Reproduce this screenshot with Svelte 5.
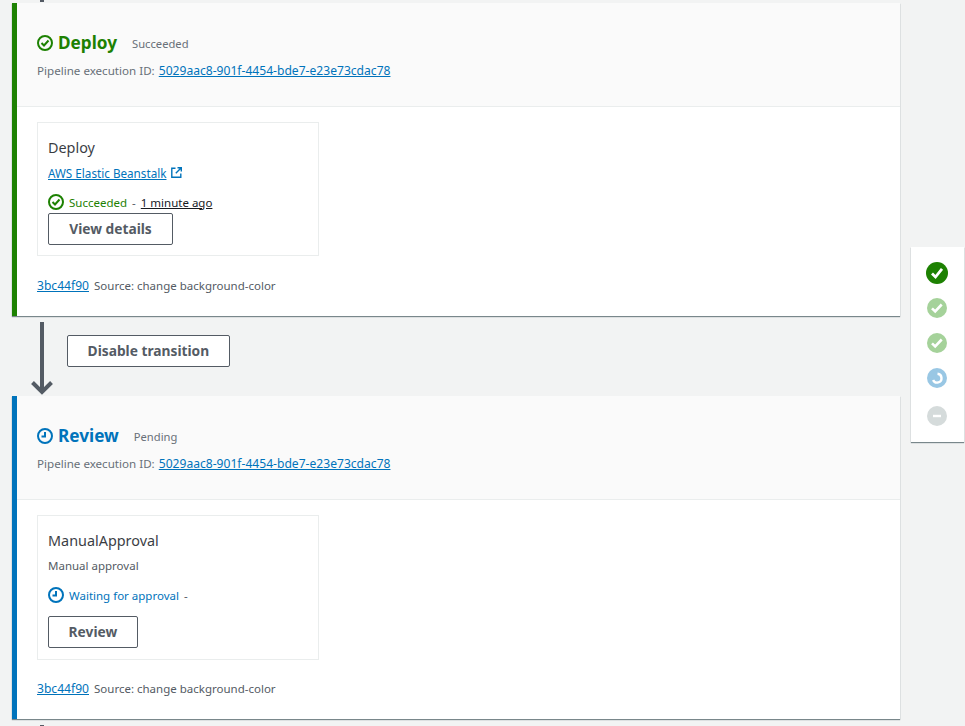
<script>
  const stages = [
    {
      name: "Deploy",
      status: "Succeeded",
      kind: "ok",
      action: "Deploy",
      provider: "AWS Elastic Beanstalk",
      link: true,
      state: "Succeeded",
      when: "1 minute ago",
      button: "View details"
    },
    {
      name: "Review",
      status: "Pending",
      kind: "wait",
      action: "ManualApproval",
      provider: "Manual approval",
      link: false,
      state: "Waiting for approval",
      when: "",
      button: "Review"
    }
  ];
</script>

{#snippet statusIcon(kind, size)}
  <svg class="ic" width={size} height={size} viewBox="0 0 16 16" fill="none" stroke="currentColor" stroke-width="2">
    <circle cx="8" cy="8" r="7" />
    {#if kind === "ok"}
      <path d="M4.5 8l2.5 2.5 4.5-5" />
    {:else}
      <path d="M8 4v4.5H4.5" />
    {/if}
  </svg>
{/snippet}

{#snippet stage(s)}
  <section class="stage {s.kind}">
    <header>
      <div class="title">
        {@render statusIcon(s.kind, 16)}
        <h2>{s.name}</h2>
        <span class="status">{s.status}</span>
      </div>
      <div class="exec">
        Pipeline execution ID: <a href="#top">5029aac8-901f-4454-bde7-e23e73cdac78</a>
      </div>
    </header>
    <div class="body">
      <div class="action">
        <div class="action-name">{s.action}</div>
        {#if s.link}
          <div class="provider">
            <a href="#top">{s.provider}</a>
            <svg class="ext" width="11" height="11" viewBox="0 0 11 11" fill="none" stroke="#0073bb" stroke-width="1.4">
              <path d="M4.5 1.200H.8v9h9V6.500" />
              <path d="M6.500.7h3.800v3.800M10 1L4.800 6.200" />
            </svg>
          </div>
        {:else}
          <div class="provider plain">{s.provider}</div>
        {/if}
        <div class="state">
          {@render statusIcon(s.kind, 16)}
          <span class="state-text">{s.state}</span>
          <span class="dash">-</span>
          {#if s.when}<span class="when">{s.when}</span>{/if}
        </div>
        <button>{s.button}</button>
      </div>
      <div class="commit">
        <a href="#top">3bc44f90</a> <span>Source: change background-color</span>
      </div>
    </div>
  </section>
{/snippet}

<div class="page" id="top">
  <div class="stub top"></div>
  {@render stage(stages[0])}
  <div class="transition">
    <svg class="arrow" width="22" height="74" viewBox="0 0 22 74" fill="none" stroke="#545b64" stroke-width="4">
      <path d="M11 0v69" />
      <path d="M1.500 60.500L11 70l9.500-9.500" />
    </svg>
    <button>Disable transition</button>
  </div>
  {@render stage(stages[1])}
  <div class="stub bottom"></div>

  <aside class="rail">
    <span class="dot done">
      <svg width="22" height="22" viewBox="0 0 22 22" fill="none" stroke="#fff" stroke-width="2.800"><path d="M6 11.500l3.500 3.500L16 6.800" /></svg>
    </span>
    <span class="dot done faded">
      <svg width="20" height="20" viewBox="0 0 20 20" fill="none" stroke="#fff" stroke-width="2.600"><path d="M5 10.300l3.200 3.200 6.500-7" /></svg>
    </span>
    <span class="dot done faded">
      <svg width="20" height="20" viewBox="0 0 20 20" fill="none" stroke="#fff" stroke-width="2.600"><path d="M5 10.300l3.200 3.200 6.500-7" /></svg>
    </span>
    <span class="dot pending">
      <svg width="20" height="20" viewBox="0 0 20 20" fill="none" stroke="#fff" stroke-width="2.400"><path d="M10.500 5.800a4.400 4.400 0 1 1-4.400 6.200" /></svg>
    </span>
    <span class="dot off">
      <svg width="20" height="20" viewBox="0 0 20 20" fill="none" stroke="#fff" stroke-width="2.400"><path d="M6 10h8" /></svg>
    </span>
  </aside>
</div>

<style>
  :global(body) {
    margin: 0;
    background: #f2f3f3;
    font-family: "Noto Sans", "Open Sans", sans-serif;
    color: #16191f;
  }

  .page {
    position: relative;
    width: 965px;
    height: 726px;
    overflow: hidden;
    padding: 3px 65px 0 12px;
    box-sizing: border-box;
  }

  a {
    color: #0073bb;
  }

  .stage {
    background: #fff;
    border-left: 5px solid;
    box-shadow: 0 1px 1px 0 rgba(0, 28, 36, 0.5);
  }
  .stage.ok {
    border-left-color: #1d8102;
  }
  .stage.wait {
    border-left-color: #0073bb;
  }
  .ok .ic,
  .ok h2,
  .ok .state-text {
    color: #1d8102;
  }
  .wait .ic,
  .wait h2,
  .wait .state-text {
    color: #0073bb;
  }

  header {
    height: 104px;
    box-sizing: border-box;
    padding: 28px 20px 0;
    background: #fafafa;
    border-bottom: 1px solid #eaeded;
  }
  .title {
    display: flex;
    align-items: center;
    height: 24px;
  }
  h2 {
    margin: 0 15px 0 5px;
    font-size: 17.2px;
    font-weight: 700;
    line-height: 24px;
  }
  .status {
    font-size: 11.2px;
    color: #687078;
    margin-top: 1px;
  }
  .exec {
    margin-top: 7px;
    font-size: 11.6px;
    line-height: 18px;
    color: #687078;
  }
  .exec a {
    margin-left: 1px;
    font-size: 12.1px;
  }

  .body {
    padding: 15px 20px 0;
  }
  .action {
    width: 282px;
    box-sizing: border-box;
    border: 1px solid #eaeded;
    padding: 7px 10px 11px;
    font-size: 11.5px;
  }
  .ok .action {
    padding-bottom: 10px;
  }
  .action-name {
    font-size: 14.4px;
    line-height: 36px;
    height: 34px;
    color: #16191f;
    opacity: 0.85;
  }
  .provider {
    display: flex;
    align-items: center;
    gap: 5px;
    line-height: 18px;
    height: 18px;
    font-size: 11.7px;
  }
  .provider.plain {
    font-size: 11.5px;
    color: #545b64;
  }
  .ext {
    margin-bottom: 2px;
  }
  .state {
    display: flex;
    align-items: center;
    margin-top: 11px;
    height: 18px;
  }
  .state-text {
    margin-left: 5px;
  }
  .dash {
    margin: 0 5px;
    color: #545b64;
  }
  .when {
    color: #16191f;
    text-decoration: underline;
  }

  button {
    display: block;
    background: #fff;
    border: 1px solid #545b64;
    border-radius: 2px;
    color: #545b64;
    font: 700 13.75px "Noto Sans", "Open Sans", sans-serif;
    padding: 0 19.6px 2px;
    height: 32px;
  }
  .ok .action button {
    margin-top: 2px;
    width: 125px;
  }
  .wait button {
    margin-top: 12px;
  }

  .commit {
    margin-top: 21px;
    height: 39px;
    font-size: 11.5px;
    line-height: 18px;
    color: #545b64;
  }
  .wait .commit {
    margin-top: 20px;
  }
  .commit a {
    font-size: 12.1px;
  }
  .commit span {
    margin-left: 2px;
  }

  .transition {
    display: flex;
    align-items: center;
    height: 80px;
    padding-left: 19px;
    position: relative;
  }
  .arrow {
    margin-top: 6px;
  }
  .transition button {
    margin: 0 0 10px 14px;
  }

  .stub {
    position: absolute;
    width: 4px;
    background: #545b64;
  }
  .stub.top {
    left: 40px;
    top: 0;
    height: 2px;
  }
  .stub.bottom {
    left: 40px;
    top: 725px;
    height: 1px;
  }

  .rail {
    position: absolute;
    left: 911px;
    top: 247px;
    width: 53px;
    height: 195px;
    background: #fff;
    box-shadow: 0 1px 1px 0 rgba(0, 28, 36, 0.5);
    display: flex;
    flex-direction: column;
    align-items: center;
    padding: 15px 1px 0 0;
    box-sizing: border-box;
  }
  .dot {
    width: 22px;
    height: 22px;
    margin-bottom: 14px;
    border-radius: 50%;
    display: flex;
    align-items: center;
    justify-content: center;
  }
  .dot.done {
    background: #1d8102;
  }
  .dot.faded {
    width: 20px;
    height: 20px;
    margin-bottom: 15px;
    background: #a5d29a;
  }
  .dot.pending {
    width: 20px;
    height: 20px;
    margin-bottom: 18px;
    background: #99c7e4;
  }
  .dot.off {
    width: 20px;
    height: 20px;
    background: #d5dbdb;
  }
</style>
